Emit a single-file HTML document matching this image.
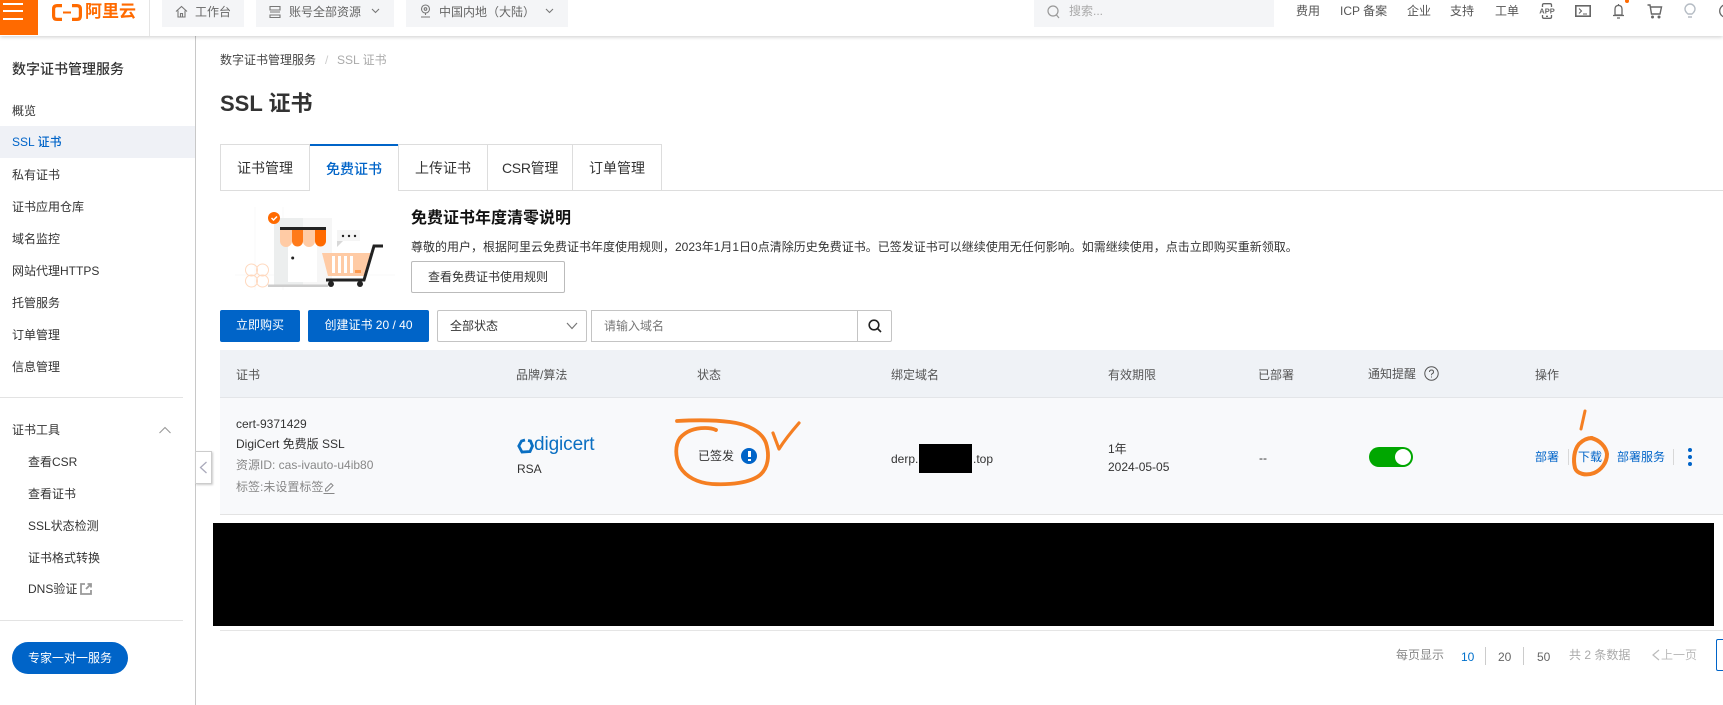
<!DOCTYPE html>
<html lang="zh-CN">
<head>
<meta charset="utf-8">
<title>SSL 证书</title>
<style>
html,body{margin:0;padding:0;width:1723px;height:705px;overflow:hidden;background:#fff}
body{position:relative;font-family:"Liberation Sans","Noto Sans CJK SC",sans-serif;font-size:12px;color:#333}
.t{position:absolute;white-space:nowrap;line-height:20px;height:20px}
.b{position:absolute;box-sizing:border-box}
svg{position:absolute;overflow:visible}
.g{color:#666}
.blue{color:#0064c8}
.tab{position:absolute;top:144px;height:47px;box-sizing:border-box;border:1px solid #ddd;border-left:0;background:#fff;font-size:14px;line-height:46px;text-align:center;color:#333}
.side{left:12px;color:#333}
.sub{left:28px;color:#333}
.h{color:#555;top:365px}
</style>
</head>
<body>

<!-- Header -->
<div class="b" style="left:0;top:0;width:1723px;height:36px;background:#fff;box-shadow:0 1px 4px rgba(0,0,0,.2);z-index:5">
  <div class="b" style="left:0;top:0;width:38px;height:35px;background:#ff6a00"></div>
  <div class="b" style="left:3px;top:3px;width:20px;height:2px;background:#fff"></div>
  <div class="b" style="left:3px;top:10px;width:20px;height:2px;background:#fff"></div>
  <div class="b" style="left:3px;top:18px;width:20px;height:2px;background:#fff"></div>
  <svg style="left:52px;top:4px" width="30" height="17" viewBox="0 0 30 17" fill="none" stroke="#ff6a00" stroke-width="3.200"><path d="M10 1.600H5Q1.600 1.600 1.600 5V12Q1.600 15.400 5 15.400H10"/><path d="M20 1.600H25Q28.400 1.600 28.400 5V12Q28.400 15.400 25 15.400H20"/><path d="M11 8.500H19" stroke-width="2"/></svg>
  <div class="t" style="left:85px;top:2px;font-size:17px;font-weight:700;color:#ff6a00;letter-spacing:0">阿里云</div>
  <div class="b" style="left:149px;top:0;width:1px;height:36px;background:#e5e5e5"></div>

  <div class="b" style="left:162px;top:0;width:82px;height:27px;background:#f4f5f7"></div>
  <svg style="left:175px;top:5px" width="13" height="13" viewBox="0 0 13 13" fill="none" stroke="#777" stroke-width="1.100"><path d="M1 6.500 6.500 1.500 12 6.500M3 5.500V12H10V5.500M5.500 12V8.500H7.500V12"/></svg>
  <div class="t g" style="left:195px;top:2px">工作台</div>

  <div class="b" style="left:256px;top:0;width:138px;height:27px;background:#f4f5f7"></div>
  <svg style="left:269px;top:5px" width="12" height="13" viewBox="0 0 12 13" fill="none" stroke="#777" stroke-width="1.100"><path d="M1 1.500H11V5H1ZM1 7H11M1 10H11V12.500H1Z"/></svg>
  <div class="t g" style="left:289px;top:2px">账号全部资源</div>
  <svg style="left:371px;top:8px" width="9" height="6" viewBox="0 0 9 6" fill="none" stroke="#777" stroke-width="1.100"><path d="M1 1 4.500 4.500 8 1"/></svg>

  <div class="b" style="left:406px;top:0;width:162px;height:27px;background:#f4f5f7"></div>
  <svg style="left:420px;top:4px" width="11" height="14" viewBox="0 0 11 14" fill="none" stroke="#777" stroke-width="1.100"><circle cx="5.500" cy="5" r="4"/><circle cx="5.500" cy="5" r="1.300"/><path d="M5.500 9V11M1 13H10"/></svg>
  <div class="t g" style="left:439px;top:2px">中国内地（大陆）</div>
  <svg style="left:545px;top:8px" width="9" height="6" viewBox="0 0 9 6" fill="none" stroke="#777" stroke-width="1.100"><path d="M1 1 4.500 4.500 8 1"/></svg>

  <div class="b" style="left:1034px;top:0;width:240px;height:27px;background:#f4f5f7"></div>
  <svg style="left:1047px;top:5px" width="13" height="14" viewBox="0 0 13 14" fill="none" stroke="#999" stroke-width="1.200"><circle cx="6" cy="6" r="5"/><path d="M9.500 10 12 13"/></svg>
  <div class="t" style="left:1069px;top:1px;color:#aaa">搜索...</div>

  <div class="t g" style="left:1296px;top:1px;color:#555">费用</div>
  <div class="t g" style="left:1340px;top:1px;color:#555">ICP 备案</div>
  <div class="t g" style="left:1407px;top:1px;color:#555">企业</div>
  <div class="t g" style="left:1450px;top:1px;color:#555">支持</div>
  <div class="t g" style="left:1495px;top:1px;color:#555">工单</div>

  <svg style="left:1539px;top:3px" width="16" height="16" viewBox="0 0 16 16" fill="none" stroke="#666" stroke-width="1.300"><path d="M3.500 4V2Q3.500 .7 5 .7H11Q12.500 .7 12.500 2V4M3.500 12V14Q3.500 15.300 5 15.300H11Q12.500 15.300 12.500 14V12"/><path d="M7 13.300H9"/><text x="8" y="10.500" text-anchor="middle" font-family="Liberation Sans" font-size="7.500" font-weight="700" fill="#666" stroke="none">APP</text></svg>
  <svg style="left:1575px;top:5px" width="16" height="12" viewBox="0 0 16 12" fill="none" stroke="#666" stroke-width="1.600"><rect x=".8" y=".8" width="14.400" height="10.400"/><path d="M4 3.500 6.500 6 4 8.500M8 9H12" stroke-width="1.100"/></svg>
  <svg style="left:1612px;top:3px" width="13" height="16" viewBox="0 0 13 16" fill="none" stroke="#666" stroke-width="1.300"><path d="M3 12V6Q3 2.500 6.500 2.500T10 6V12ZM1 12.500H12M5 15H8M6.500 1V2.500"/></svg>
  <div class="b" style="left:1625px;top:-1px;width:4px;height:4px;border-radius:50%;background:#ff6a00"></div>
  <svg style="left:1647px;top:4px" width="16" height="15" viewBox="0 0 16 15" fill="none" stroke="#666" stroke-width="1.400"><path d="M.5 1H3L4.500 10H13L14.500 3H3.300"/><circle cx="5.500" cy="13" r=".8" fill="#666"/><circle cx="12" cy="13" r=".8" fill="#666"/></svg>
  <svg style="left:1684px;top:3px" width="12" height="16" viewBox="0 0 12 16" fill="none" stroke="#b5bcc4" stroke-width="1.400"><path d="M4 11Q1 8.500 1 6A5 5 0 0 1 11 6Q11 8.500 8 11ZM4 14H8"/></svg>
  <svg style="left:1719px;top:4px" width="14" height="14" viewBox="0 0 14 14" fill="none" stroke="#666" stroke-width="1.300"><circle cx="7" cy="7" r="6.300"/></svg>
</div>

<!-- Sidebar -->
<div class="b" style="left:195px;top:36px;width:1px;height:669px;background:#c8c8c8"></div>
<div class="t" style="left:12px;top:59px;font-size:14px;font-weight:500;color:#333">数字证书管理服务</div>
<div class="b" style="left:0;top:126px;width:195px;height:32px;background:#eff1f6"></div>
<div class="t side" style="top:101px">概览</div>
<div class="t side blue" style="top:132px;font-weight:500;color:#0064c8">SSL 证书</div>
<div class="t side" style="top:165px">私有证书</div>
<div class="t side" style="top:197px">证书应用仓库</div>
<div class="t side" style="top:229px">域名监控</div>
<div class="t side" style="top:261px">网站代理HTTPS</div>
<div class="t side" style="top:293px">托管服务</div>
<div class="t side" style="top:325px">订单管理</div>
<div class="t side" style="top:357px">信息管理</div>
<div class="b" style="left:0;top:397px;width:183px;height:1px;background:#e3e3e3"></div>
<div class="t side" style="top:420px">证书工具</div>
<svg style="left:159px;top:426px" width="12" height="8" viewBox="0 0 12 8" fill="none" stroke="#999" stroke-width="1.100"><path d="M.5 7 6 1.500 11.500 7"/></svg>
<div class="t sub" style="top:452px">查看CSR</div>
<div class="t sub" style="top:484px">查看证书</div>
<div class="t sub" style="top:516px">SSL状态检测</div>
<div class="t sub" style="top:548px">证书格式转换</div>
<div class="t sub" style="top:579px">DNS验证</div>
<svg style="left:80px;top:583px" width="12" height="12" viewBox="0 0 12 12" fill="none" stroke="#999" stroke-width="1.800"><path d="M5 1H1V11H11V7M6 6 11 1M7.500 1H11V4.500"/></svg>
<div class="b" style="left:0;top:620px;width:183px;height:1px;background:#e3e3e3"></div>
<div class="b" style="left:12px;top:642px;width:116px;height:32px;border-radius:16px;background:#0064c8;color:#fff;text-align:center;line-height:32px">专家一对一服务</div>
<div class="b" style="left:195px;top:451px;width:17px;height:33px;background:#fff;border:1px solid #ccc;box-shadow:1px 1px 2px rgba(0,0,0,.2);z-index:3"></div>
<svg style="left:199px;top:461px;z-index:4" width="9" height="13" viewBox="0 0 9 13" fill="none" stroke="#aab" stroke-width="1.300"><path d="M7.500 1 1.500 6.500 7.500 12"/></svg>

<!-- Breadcrumb + title -->
<div class="t" style="left:220px;top:50px;color:#444">数字证书管理服务</div>
<div class="t" style="left:325px;top:50px;color:#ccc">/</div>
<div class="t" style="left:337px;top:50px;color:#aaa">SSL 证书</div>
<div class="t" style="left:220px;top:89px;font-size:22px;font-weight:700;line-height:30px;height:30px;color:#333">SSL 证书</div>

<!-- Tabs -->
<div class="b" style="left:220px;top:190px;width:1503px;height:1px;background:#ddd"></div>
<div class="tab" style="left:220px;width:90px;border-left:1px solid #ddd">证书管理</div>
<div class="tab" style="left:310px;width:88px;border:0;border-top:2px solid #0064c8;color:#0064c8;font-weight:500;line-height:46px;height:47px">免费证书</div>
<div class="tab" style="left:398px;width:90px;border-left:1px solid #ddd">上传证书</div>
<div class="tab" style="left:488px;width:85px;letter-spacing:-.3px">CSR管理</div>
<div class="tab" style="left:573px;width:89px">订单管理</div>

<!-- Banner -->
<svg style="left:225px;top:205px" width="180" height="90" viewBox="0 0 180 90" fill="none">
  <path d="M10 70H170M30 2V85M58 2V85" stroke="#f8f8f8"/>
  <rect x="49" y="13" width="29" height="67" fill="#eceeee"/>
  <rect x="78" y="13" width="29" height="67" fill="#f6f6f6"/>
  <rect x="63" y="36" width="29" height="41" fill="#fff"/>
  <path d="M55 23H67V36A6 6 0 0 1 55 36Z" fill="#ffcba5"/>
  <path d="M67 23H78V36A5.500 5.500 0 0 1 67 36Z" fill="#ff7a1a"/>
  <path d="M78 23H90V36A6 6 0 0 1 78 36Z" fill="#ffcba5"/>
  <path d="M90 23H101V36A5.500 5.500 0 0 1 90 36Z" fill="#ff6a00"/>
  <rect x="55" y="22" width="46" height="3" fill="#222"/>
  <circle cx="67.700" cy="53" r="1.500" fill="#222"/>
  <circle cx="49" cy="13" r="6" fill="#ff6a00"/>
  <path d="M46.500 13 48.500 15 52 11.500" stroke="#fff" stroke-width="1.500"/>
  <rect x="112" y="25" width="23" height="11" fill="#f5f5f5"/>
  <path d="M112 36V42L118 36Z" fill="#d8d8d8"/>
  <circle cx="118" cy="31" r="1.200" fill="#222"/><circle cx="124" cy="31" r="1.200" fill="#222"/><circle cx="130" cy="31" r="1.200" fill="#222"/>
  <path d="M97 48H146L139 71H103Z" fill="#ffcba5"/>
  <path d="M107 51H110V68H107ZM113 51H116V68H113ZM119 51H122V68H119ZM125 51H128V68H125Z" fill="#fff"/>
  <rect x="130" y="65" width="6" height="3" fill="#ff9a4d"/>
  <path d="M101 75H139L149 41H158" stroke="#222" stroke-width="3"/>
  <rect x="43" y="79.500" width="60" height="2.500" fill="#ccc"/>
  <circle cx="106" cy="79" r="3" fill="#222"/><circle cx="135" cy="79" r="3" fill="#222"/>
  <g stroke="#ffd9bf" stroke-width="1"><circle cx="26.500" cy="65" r="6"/><circle cx="37.500" cy="65" r="6"/><circle cx="26.500" cy="76" r="6"/><circle cx="37.500" cy="76" r="6"/></g>
</svg>
<div class="t" style="left:411px;top:209px;font-size:16px;font-weight:700;color:#111">免费证书年度清零说明</div>
<div class="t" style="left:411px;top:237px;color:#333">尊敬的用户，根据阿里云免费证书年度使用规则，2023年1月1日0点清除历史免费证书。已签发证书可以继续使用无任何影响。如需继续使用，点击立即购买重新领取。</div>
<div class="b" style="left:411px;top:261px;width:154px;height:32px;border:1px solid #bbb;border-radius:2px;text-align:center;line-height:30px;color:#333">查看免费证书使用规则</div>

<!-- Toolbar -->
<div class="b" style="left:220px;top:310px;width:80px;height:32px;background:#0064c8;border-radius:2px;color:#fff;text-align:center;line-height:31px">立即购买</div>
<div class="b" style="left:308px;top:310px;width:121px;height:32px;background:#0064c8;border-radius:2px;color:#fff;text-align:center;line-height:31px">创建证书 20 / 40</div>
<div class="b" style="left:437px;top:310px;width:150px;height:32px;border:1px solid #c4c4c4;border-radius:2px;line-height:31px;padding-left:12px;color:#333">全部状态</div>
<svg style="left:566px;top:322px" width="12" height="8" viewBox="0 0 12 8" fill="none" stroke="#777" stroke-width="1.200"><path d="M1 1 6 6.500 11 1"/></svg>
<div class="b" style="left:591px;top:310px;width:267px;height:32px;border:1px solid #c4c4c4;line-height:31px;padding-left:12px;color:#777">请输入域名</div>
<div class="b" style="left:857px;top:310px;width:35px;height:32px;border:1px solid #c4c4c4;border-radius:0 2px 2px 0"></div>
<svg style="left:868px;top:319px" width="14" height="14" viewBox="0 0 14 14" fill="none" stroke="#222" stroke-width="1.600"><circle cx="6" cy="6" r="4.800"/><path d="M9.500 9.500 13 13"/></svg>

<!-- Table -->
<div class="b" style="left:220px;top:350px;width:1503px;height:48px;background:#eff2f6;border-bottom:1px solid #e3e5e8"></div>
<div class="b" style="left:220px;top:398px;width:1503px;height:117px;background:#f8f9fb;border-bottom:1px solid #e3e3e3"></div>
<div class="t h" style="left:236px">证书</div>
<div class="t h" style="left:516px">品牌/算法</div>
<div class="t h" style="left:697px">状态</div>
<div class="t h" style="left:891px">绑定域名</div>
<div class="t h" style="left:1108px">有效期限</div>
<div class="t h" style="left:1258px">已部署</div>
<div class="t h" style="left:1368px;top:364px">通知提醒</div>
<svg style="left:1424px;top:366px" width="15" height="15" viewBox="0 0 15 15" fill="none" stroke="#555"><circle cx="7.500" cy="7.500" r="6.700"/><path d="M5.500 6Q5.500 4 7.500 4T9.500 6Q9.500 7.200 8 7.800 7.500 8 7.500 9.200M7.500 10.500V11.500"/></svg>
<div class="t h" style="left:1535px">操作</div>

<div class="t" style="left:236px;top:414px">cert-9371429</div>
<div class="t" style="left:236px;top:434px">DigiCert 免费版 SSL</div>
<div class="t" style="left:236px;top:455px;color:#888">资源ID: cas-ivauto-u4ib80</div>
<div class="t" style="left:236px;top:477px;color:#888">标签:未设置标签</div>
<svg style="left:323px;top:481px" width="12" height="13" viewBox="0 0 12 13" fill="none" stroke="#888"><path d="M2.500 8 8 2.500 10 4.500 4.500 10H2.500ZM.5 12.500H11.500"/></svg>

<svg style="left:517px;top:438px" width="17" height="16" viewBox="0 0 17 16" fill="none" stroke="#0a6fc2" stroke-width="2.800"><path d="M11 2.500 13.500 3 15.500 8 13 13.500 5 14 1.800 8 4.500 3 8 2"/></svg>
<div class="t" style="left:534px;top:435px;font-size:19px;color:#0a6fc2;letter-spacing:-.1px">digicert</div>
<div class="t" style="left:517px;top:459px">RSA</div>

<div class="t" style="left:698px;top:446px">已签发</div>
<div class="b" style="left:741px;top:448px;width:16px;height:16px;border-radius:50%;background:#0064c8"></div>
<div class="b" style="left:748px;top:451px;width:2.500px;height:6px;background:#fff"></div>
<div class="b" style="left:748px;top:458.500px;width:2.500px;height:2.500px;background:#fff"></div>

<div class="t" style="left:891px;top:449px">derp.</div>
<div class="b" style="left:919px;top:444px;width:53px;height:29px;background:#000"></div>
<div class="t" style="left:973px;top:449px">.top</div>

<div class="t" style="left:1108px;top:439px">1年</div>
<div class="t" style="left:1108px;top:457px">2024-05-05</div>
<div class="t" style="left:1259px;top:448px">--</div>

<div class="b" style="left:1369px;top:447px;width:44px;height:20px;border-radius:10px;background:#00a700"></div>
<div class="b" style="left:1395px;top:449px;width:16px;height:16px;border-radius:50%;background:#fff"></div>

<div class="t blue" style="left:1535px;top:447px">部署</div>
<div class="b" style="left:1568px;top:449px;width:1px;height:16px;background:#d8d8d8"></div>
<div class="t blue" style="left:1578px;top:447px">下载</div>
<div class="t blue" style="left:1617px;top:447px">部署服务</div>
<div class="b" style="left:1673px;top:449px;width:1px;height:16px;background:#d8d8d8"></div>
<div class="b" style="left:1688px;top:448px;width:4px;height:4px;border-radius:50%;background:#0064c8"></div>
<div class="b" style="left:1688px;top:455px;width:4px;height:4px;border-radius:50%;background:#0064c8"></div>
<div class="b" style="left:1688px;top:462px;width:4px;height:4px;border-radius:50%;background:#0064c8"></div>

<!-- Annotations -->
<svg style="left:0;top:0;z-index:6" width="1723" height="705" viewBox="0 0 1723 705" fill="none" stroke="#f57f22" stroke-linecap="round" stroke-linejoin="round">
  <path stroke-width="3.800" d="M677 421C695 420 715 420 730 422C748 424 762 432 766 443C770 456 768 468 760 475C750 483 730 485 712 484C698 483 686 477 680 467C675 457 675 445 680 438C686 431 695 428 705 428C710 428 714 429 716 430"/>
  <path stroke-width="3.200" d="M773 433 779 449C786 438 792 431 799 423"/>
  <path stroke-width="4" d="M1591 438C1600 440 1606 447 1607 454C1607 463 1601 470 1594 473C1586 476 1577 474 1575 468C1573 460 1574 450 1579 444C1583 440 1588 438 1592 438"/>
  <path stroke-width="3" d="M1585 411 1581 429"/>
</svg>

<!-- Redaction -->
<div class="b" style="left:213px;top:523px;width:1501px;height:103px;background:#000"></div>
<div class="b" style="left:220px;top:630px;width:1503px;height:1px;background:#e5e5e5"></div>

<!-- Pagination -->
<div class="t" style="left:1396px;top:645px;color:#888">每页显示</div>
<div class="t" style="left:1461px;top:647px;color:#0070cc">10</div>
<div class="b" style="left:1485px;top:647px;width:1px;height:18px;background:#ccc"></div>
<div class="t" style="left:1498px;top:647px;color:#666">20</div>
<div class="b" style="left:1523px;top:647px;width:1px;height:18px;background:#ccc"></div>
<div class="t" style="left:1537px;top:647px;color:#666">50</div>
<div class="t" style="left:1569px;top:645px;color:#aaa">共 2 条数据</div>
<svg style="left:1652px;top:649px" width="8" height="12" viewBox="0 0 8 12" fill="none" stroke="#bbb" stroke-width="1.200"><path d="M7 1 1 6 7 11"/></svg>
<div class="t" style="left:1661px;top:645px;color:#bbb">上一页</div>
<div class="b" style="left:1716px;top:639px;width:30px;height:32px;border:1px solid #0064c8;border-radius:2px"></div>

</body>
</html>
